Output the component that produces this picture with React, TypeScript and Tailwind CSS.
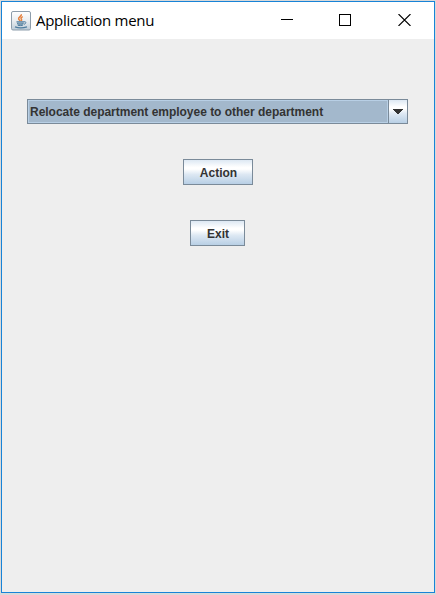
import React from "react";

function JavaIcon() {
  return (
    <svg width="20" height="20" viewBox="0 0 20 20" className="shrink-0">
      <defs>
        <linearGradient id="tile" x1="0" y1="0" x2="0" y2="1">
          <stop offset="0" stopColor="#ffffff" />
          <stop offset="0.5" stopColor="#e9edf0" />
          <stop offset="1" stopColor="#bccbd7" />
        </linearGradient>
      </defs>
      <rect x="0.5" y="0.5" width="19" height="18.5" rx="1.5" fill="url(#tile)" stroke="#8d9dab" />
      <path d="M10.300 3.300c.8 1.800-3 2.700-2.700 4.500.2 1 1.200 1.300 1.500 2.200M11.800 5.600c-2.200 1-2 2-1.300 2.800.4.600.1 1.100-.4 1.600" fill="none" stroke="#e5813e" strokeWidth="1.500" />
      <path d="M5.500 10.700h7.500l-.8 3.500H6.800z" fill="#9db5c6" />
      <path d="M5.500 10.800h7.500M6 12.600c2 .6 4.500.6 6.500 0M6.800 14.300c1.500.4 3.500.4 5 0M13 10.800c2.500-.6 2.500 1.800 0 2.500" fill="none" stroke="#4f7d9e" strokeWidth="1" />
      <path d="M4 15.800c3 1.200 8.500 1.200 12 0" fill="none" stroke="#4f7d9e" strokeWidth="1.300" />
    </svg>
  );
}

function TitleBar() {
  return (
    <header className="flex h-[37px] shrink-0 items-center bg-white pl-[9px]">
      <JavaIcon />
      <h1 className="ml-[5px] w-[119px] pb-0.5 whitespace-nowrap font-['Open_Sans','Noto_Sans',sans-serif] text-[15px] leading-5 tracking-[-0.3px] text-black">
        Application menu
      </h1>
      <div className="mr-[23px] mb-px ml-auto flex items-center gap-[46px]">
        <svg width="12" height="12" shapeRendering="crispEdges"><path d="M0 5.500h12" stroke="#000" /></svg>
        <svg width="12" height="12" shapeRendering="crispEdges"><rect x="0.500" y="0.500" width="11" height="11" fill="none" stroke="#000" /></svg>
        <svg width="13" height="12" className="ml-px"><path d="M.5 0l12 12M12.500 0l-12 12" stroke="#000" strokeWidth="1.100" /></svg>
      </div>
    </header>
  );
}

const metal =
  "border border-[#7a8a99] bg-[linear-gradient(to_bottom,#dde8f3_0%,#ffffff_30%,#ffffff_38%,#dde8f3_60%,#b8cfe5_100%)]";
const label = "font-['Liberation_Sans',Arial,sans-serif] text-[12px] font-bold text-[#333333]";

export default function App() {
  return (
    <div className="flex h-[595px] w-[436px] flex-col bg-[#d9d9d9] pt-px pr-px pb-[2px] pl-px">
      <main className="flex flex-1 flex-col border border-[#1883d7] bg-[#eeeeee]">
        <TitleBar />
        <section className="flex flex-col items-center pt-[60px]">
          <div className="mr-px flex h-[25px] w-[381px] border border-[#7a8a99]">
            <div className={`flex flex-1 items-center border border-[#b8cfe5] bg-[#a3b8cc] pl-px tracking-[-0.02px] whitespace-nowrap ${label}`}>
              Relocate department employee to other department
            </div>
            <div className="flex w-[19px] items-center justify-center border-l border-[#7a8a99] bg-[linear-gradient(to_bottom,#dde8f3_0%,#ffffff_30%,#ffffff_38%,#dde8f3_60%,#b8cfe5_100%)]">
              <svg width="10" height="5" shapeRendering="crispEdges">
                <path d="M0 0h10v1H9v1H8v1H7v1H6v1H4V4H3V3H2V2H1V1H0z" fill="#333333" />
              </svg>
            </div>
          </div>
          <button className={`mt-[35px] h-[26px] w-[70px] pt-0.5 pl-px ${metal} ${label}`}>Action</button>
          <button className={`mt-[35px] mr-px h-[26px] w-[55px] pt-0.5 pl-px ${metal} ${label}`}>Exit</button>
        </section>
      </main>
    </div>
  );
}
